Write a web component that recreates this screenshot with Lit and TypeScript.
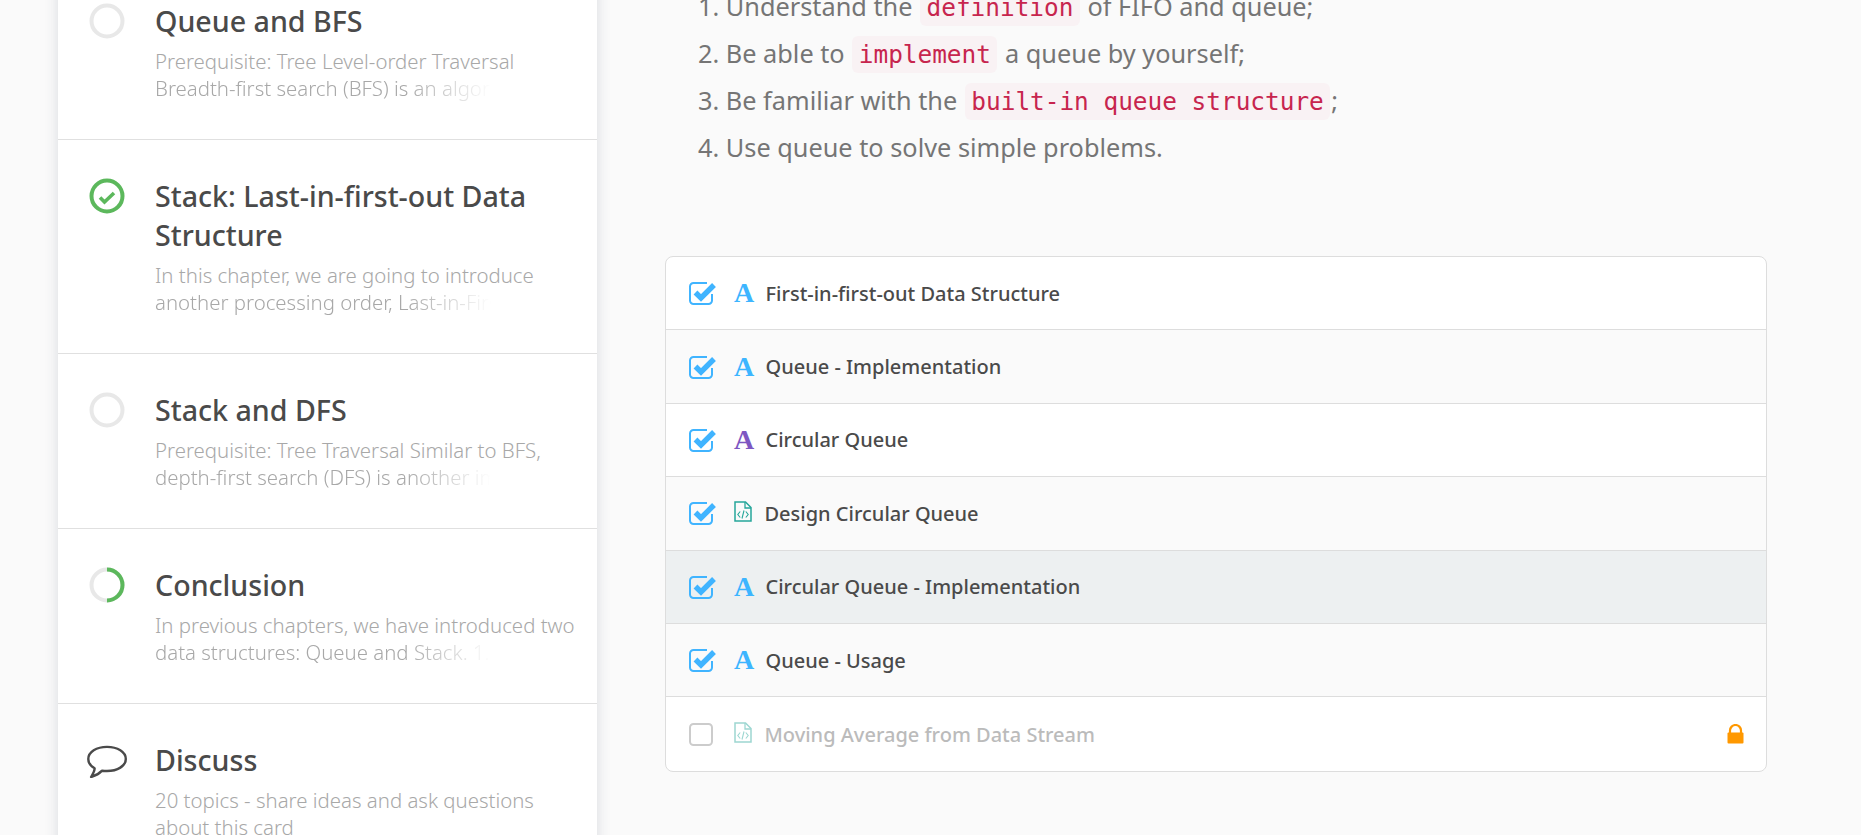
import {LitElement, html, css, svg} from 'lit';
import {customElement} from 'lit/decorators.js';

type Status = 'empty' | 'done' | 'half' | 'chat';

interface Chapter {
  status: Status;
  title: string[];
  lines: string[];
  fade: boolean;
}

interface Item {
  kind: 'article' | 'articleVisited' | 'code';
  label: string;
  done: boolean;
  locked?: boolean;
  active?: boolean;
}

const chapters: Chapter[] = [
  {
    status: 'empty',
    title: ['Queue and BFS'],
    lines: ['Prerequisite: Tree Level-order Traversal', 'Breadth-first search (BFS) is an algorithm to traverse'],
    fade: true,
  },
  {
    status: 'done',
    title: ['Stack: Last-in-first-out Data', 'Structure'],
    lines: ['In this chapter, we are going to introduce', 'another processing order, Last-in-First-out'],
    fade: true,
  },
  {
    status: 'empty',
    title: ['Stack and DFS'],
    lines: ['Prerequisite: Tree Traversal Similar to BFS,', 'depth-first search (DFS) is another important'],
    fade: true,
  },
  {
    status: 'half',
    title: ['Conclusion'],
    lines: ['In previous chapters, we have introduced two', 'data structures: Queue and Stack. 1. Understand'],
    fade: true,
  },
  {
    status: 'chat',
    title: ['Discuss'],
    lines: ['20 topics - share ideas and ask questions', 'about this card'],
    fade: false,
  },
];

const items: Item[] = [
  {kind: 'article', label: 'First-in-first-out Data Structure', done: true},
  {kind: 'article', label: 'Queue - Implementation', done: true},
  {kind: 'articleVisited', label: 'Circular Queue', done: true},
  {kind: 'code', label: 'Design Circular Queue', done: true},
  {kind: 'article', label: 'Circular Queue - Implementation', done: true, active: true},
  {kind: 'article', label: 'Queue - Usage', done: true},
  {kind: 'code', label: 'Moving Average from Data Stream', done: false, locked: true},
];

function statusIcon(status: Status) {
  if (status === 'chat') {
    return html`<svg class="status chat" viewBox="0 0 40 36" fill="none">
      <path
        d="M20 4.900C9.500 4.900 1.300 10 1.300 17c0 3.700 2.300 7 6.300 9.200 .2 2.600-1.500 5.500-3.500 8.800 4.500-1.200 8.500-3.700 11-6.300 1.600 .2 3.200 .3 4.900 .3 10.500 0 18.800-5 18.800-12S30.500 4.900 20 4.900z"
        stroke="#4a4a4a"
        stroke-width="2.400"
        stroke-linejoin="round"
      />
    </svg>`;
  }
  const ring = status === 'done' ? '#5cb85c' : '#e8e8e8';
  return html`<svg class="status" viewBox="0 0 36 36" fill="none">
    <circle cx="18" cy="18" r="15.500" stroke=${ring} stroke-width="4" />
    ${status === 'half'
      ? svg`<path d="M18 2.500a15.500 15.500 0 0 1 0 31" stroke="#5cb85c" stroke-width="4" />`
      : ''}
    ${status === 'done'
      ? svg`<path d="M11 19.500l4.500 4.500 9.500-9" stroke="#5cb85c" stroke-width="3.600" />`
      : ''}
  </svg>`;
}

function checkbox(done: boolean) {
  if (!done) {
    return html`<svg class="check" viewBox="0 0 29 26" fill="none">
      <rect x="2" y="3" width="22" height="21" rx="3.500" stroke="#ccc" stroke-width="2" />
    </svg>`;
  }
  return html`<svg class="check" viewBox="0 0 29 26" fill="none">
    <path
      d="M19 3H5.500A3.500 3.500 0 0 0 2 6.500v14A3.500 3.500 0 0 0 5.500 24h15a3.500 3.500 0 0 0 3.500-3.500V14"
      stroke="#40b4ff"
      stroke-width="2"
    />
    <path d="M7.500 12.500l5.500 5.500L26 5" stroke="#40b4ff" stroke-width="5.400" />
  </svg>`;
}

function kindIcon(item: Item) {
  if (item.kind === 'code') {
    return html`<svg class="file" viewBox="0 0 18 21" fill="none" stroke="#26a69a">
      <path d="M1 1h10.500L17 6.500V20H1z" stroke-width="1.500" />
      <path d="M11 1v6h6" stroke-width="1.300" />
      <path d="M6.200 10.500L3.800 13.500l2.400 3M11.800 10.500l2.400 3-2.400 3M10 9.500l-2 8" stroke-width="1.100" />
    </svg>`;
  }
  return html`<span class="letter ${item.kind === 'articleVisited' ? 'visited' : ''}">A</span>`;
}

@customElement('app-root')
export class AppRoot extends LitElement {
  static styles = css`
    :host {
      display: block;
      height: 835px;
      overflow: hidden;
      background: #fafafa;
      font-family: 'Noto Sans', 'Open Sans', sans-serif;
    }

    .page {
      display: flex;
      align-items: flex-start;
      padding-left: 58px;
      margin-top: -35px;
    }

    .card {
      flex: none;
      width: 539px;
      background: #fff;
      box-shadow: 0 0 12px rgba(60, 70, 100, 0.18);
    }

    .chapter {
      display: flex;
      padding: 36px 10px 37px 31px;
      border-bottom: 1px solid #e0e0e0;
      box-sizing: border-box;
    }

    .chapter:last-child {
      border-bottom: 0;
    }

    .status {
      flex: none;
      width: 36px;
      height: 36px;
      margin-top: 2px;
      margin-right: 30px;
    }

    .status.chat {
      width: 40px;
      margin-left: -2px;
      margin-right: 28px;
    }

    .title {
      font-size: 28.600px;
      line-height: 39px;
      font-weight: 500;
      color: #4a4a4a;
      white-space: nowrap;
    }

    .desc {
      margin-top: 8px;
      font-size: 20.400px;
      line-height: 27px;
      font-weight: 300;
      color: #a8a8a8;
      white-space: nowrap;
    }

    .desc div {
      overflow: hidden;
    }

    .desc .fade {
      width: 336px;
      -webkit-mask-image: linear-gradient(to right, #000 75%, transparent 100%);
      mask-image: linear-gradient(to right, #000 75%, transparent 100%);
    }

    .main {
      flex: none;
      width: 1102px;
      margin-left: 68px;
      padding-top: 18px;
    }

    ol {
      margin: 0 0 85px;
      padding: 0 0 0 33px;
      list-style: decimal inside;
      font-size: 25.300px;
      line-height: 47px;
      color: #757575;
      white-space: nowrap;
    }

    code {
      font-family: 'DejaVu Sans Mono', 'Liberation Mono', monospace;
      font-size: 24.400px;
      line-height: 1;
      color: #c7254e;
      background: #f9f2f4;
      padding: 4px 6.500px;
      margin: 0 1px;
      border-radius: 6px;
    }

    .list {
      border: 1px solid #ddd;
      border-radius: 8px;
      overflow: hidden;
      background: #fff;
    }

    .row {
      display: flex;
      align-items: center;
      height: 73.400px;
      padding-left: 22px;
      padding-right: 22px;
      box-sizing: border-box;
      border-bottom: 1px solid #ddd;
      font-size: 20px;
      font-weight: 500;
      color: #4a4a4a;
    }

    .row:last-child {
      border-bottom: 0;
    }

    .row:nth-child(even) {
      background: #fafafa;
    }

    .row.active {
      background: #edf0f1;
    }

    .row.locked {
      color: #bbb;
    }

    .row.locked .file {
      opacity: 0.45;
    }

    .check {
      flex: none;
      width: 29px;
      height: 26px;
      margin-right: 17px;
    }

    .slot {
      flex: none;
      width: 31.500px;
      display: flex;
      align-items: center;
    }

    .slot.code {
      width: 30.500px;
    }

    .letter {
      font-family: 'Liberation Serif', serif;
      font-size: 28px;
      line-height: 26px;
      font-weight: 700;
      color: #3db5ff;
    }

    .letter.visited {
      color: #7e57c2;
    }

    .file {
      width: 18px;
      height: 21px;
      position: relative;
      top: -2px;
    }

    .label {
      flex: 1;
      white-space: nowrap;
    }

    .lock {
      flex: none;
      width: 17px;
      height: 20px;
    }
  `;

  renderChapter(c: Chapter) {
    return html`
      <div class="chapter">
        ${statusIcon(c.status)}
        <div>
          <div class="title">${c.title.map((t) => html`<div>${t}</div>`)}</div>
          <div class="desc">
            <div>${c.lines[0]}</div>
            <div class=${c.fade ? 'fade' : ''}>${c.lines[1]}</div>
          </div>
        </div>
      </div>
    `;
  }

  renderItem(item: Item) {
    const cls = `row ${item.active ? 'active' : ''} ${item.locked ? 'locked' : ''}`;
    return html`
      <div class=${cls}>
        ${checkbox(item.done)}
        <div class="slot ${item.kind === 'code' ? 'code' : ''}">${kindIcon(item)}</div>
        <div class="label">${item.label}</div>
        ${item.locked
          ? html`<svg class="lock" viewBox="0 0 17 20">
              <path d="M3 9V6.500a5.500 5.500 0 0 1 11 0V9" fill="none" stroke="#ff9800" stroke-width="2.200" />
              <rect x="0.500" y="8.500" width="16" height="11" rx="1" fill="#ff9800" />
            </svg>`
          : ''}
      </div>
    `;
  }

  render() {
    return html`
      <div class="page">
        <div class="card">${chapters.map((c) => this.renderChapter(c))}</div>
        <div class="main">
          <ol>
            <li>Understand the <code>definition</code> of FIFO and queue;</li>
            <li>Be able to <code>implement</code> a queue by yourself;</li>
            <li>Be familiar with the <code>built-in queue structure</code>;</li>
            <li>Use queue to solve simple problems.</li>
          </ol>
          <div class="list">${items.map((i) => this.renderItem(i))}</div>
        </div>
      </div>
    `;
  }
}
